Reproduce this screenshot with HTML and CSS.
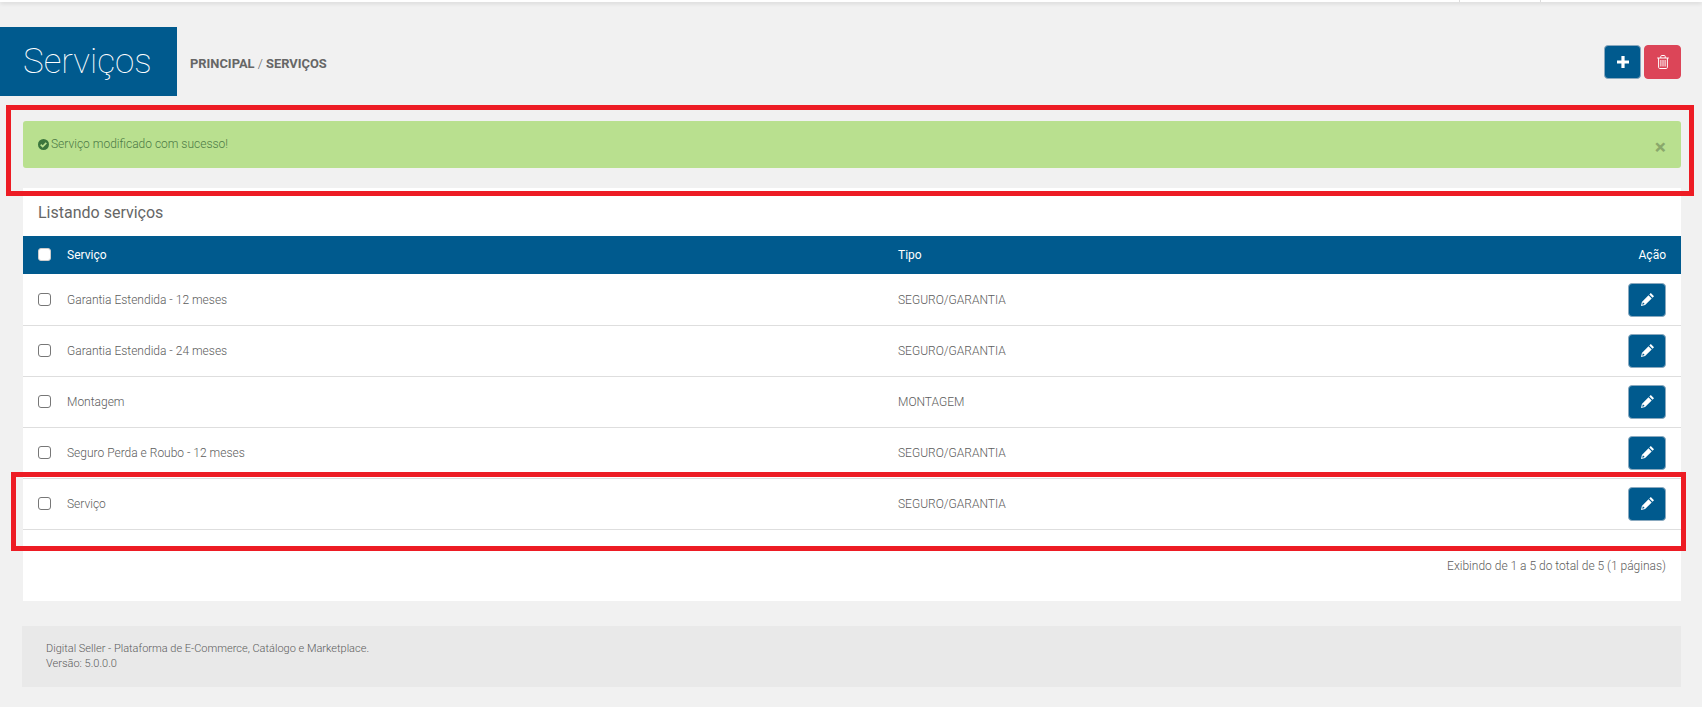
FILE: index.html
```html
<!DOCTYPE html>
<html lang="pt-BR">
<head>
<meta charset="utf-8">
<title>Serviços</title>
<link rel="stylesheet" href="styles.css">
</head>
<body>
<div class="page">
  <div class="topbar"><span class="topcell"></span><span class="topcell"></span></div>
  <header class="head">
    <h1 class="title">Serviços</h1>
    <div class="crumbs"><b>PRINCIPAL</b> / <b>SERVIÇOS</b></div>
    <div class="actions">
      <button class="btn btn-blue btn-add"><svg width="12" height="12" viewBox="0 0 12 12"><path fill="#fff" d="M4.4 0h3.2v4.4H12v3.2H7.6V12H4.4V7.6H0V4.4h4.4z"/></svg></button>
      <button class="btn btn-red"><svg width="12" height="14" viewBox="0 0 12 14"><path fill="none" stroke="#fff" stroke-width="1" d="M.2 3h11.6M1.6 3v9.3c0 .7.4 1.2 1 1.2h6.8c.6 0 1-.5 1-1.2V3M3.8 3V1.3c0-.5.3-.8.8-.8h2.8c.5 0 .8.3.8.8V3M3.9 5v6.5M6 5v6.5M8.1 5v6.5"/></svg></button>
    </div>
  </header>
  <div class="alert">
    <span class="alert-msg"><svg class="check" width="11" height="11" viewBox="0 0 11 11"><circle cx="5.5" cy="5.5" r="5.5" fill="#3c763d"/><path fill="none" stroke="#b9e08f" stroke-width="1.7" d="M2.7 5.6l2 2 3.6-3.8"/></svg>Serviço modificado com sucesso!</span>
    <span class="alert-close">×</span>
  </div>
  <section class="card">
    <h2 class="card-title">Listando serviços</h2>
    <div class="row row-head">
      <span class="box box-white"></span><span class="c-name">Serviço</span><span class="c-type">Tipo</span><span class="c-act">Ação</span>
    </div>
    <div class="row"><span class="box"></span><span class="c-name">Garantia Estendida - 12 meses</span><span class="c-type">SEGURO/GARANTIA</span><span class="c-act"><button class="btn btn-blue btn-edit"><svg class="pen" width="13" height="13" viewBox="0 0 13 13"><path fill="#fff" d="M9.8 0l3.2 3.2-1.5 1.5-3.2-3.2zM7.5 2.3l3.2 3.2-6.6 6.6L0 13l.9-4.1zM1.9 9.3l-.7 2.5 2.5-.7z"/></svg></button></span></div>
    <div class="row"><span class="box"></span><span class="c-name">Garantia Estendida - 24 meses</span><span class="c-type">SEGURO/GARANTIA</span><span class="c-act"><button class="btn btn-blue btn-edit"><svg class="pen" width="13" height="13" viewBox="0 0 13 13"><path fill="#fff" d="M9.8 0l3.2 3.2-1.5 1.5-3.2-3.2zM7.5 2.3l3.2 3.2-6.6 6.6L0 13l.9-4.1zM1.9 9.3l-.7 2.5 2.5-.7z"/></svg></button></span></div>
    <div class="row"><span class="box"></span><span class="c-name">Montagem</span><span class="c-type">MONTAGEM</span><span class="c-act"><button class="btn btn-blue btn-edit"><svg class="pen" width="13" height="13" viewBox="0 0 13 13"><path fill="#fff" d="M9.8 0l3.2 3.2-1.5 1.5-3.2-3.2zM7.5 2.3l3.2 3.2-6.6 6.6L0 13l.9-4.1zM1.9 9.3l-.7 2.5 2.5-.7z"/></svg></button></span></div>
    <div class="row"><span class="box"></span><span class="c-name">Seguro Perda e Roubo - 12 meses</span><span class="c-type">SEGURO/GARANTIA</span><span class="c-act"><button class="btn btn-blue btn-edit"><svg class="pen" width="13" height="13" viewBox="0 0 13 13"><path fill="#fff" d="M9.8 0l3.2 3.2-1.5 1.5-3.2-3.2zM7.5 2.3l3.2 3.2-6.6 6.6L0 13l.9-4.1zM1.9 9.3l-.7 2.5 2.5-.7z"/></svg></button></span></div>
    <div class="row"><span class="box"></span><span class="c-name">Serviço</span><span class="c-type">SEGURO/GARANTIA</span><span class="c-act"><button class="btn btn-blue btn-edit"><svg class="pen" width="13" height="13" viewBox="0 0 13 13"><path fill="#fff" d="M9.8 0l3.2 3.2-1.5 1.5-3.2-3.2zM7.5 2.3l3.2 3.2-6.6 6.6L0 13l.9-4.1zM1.9 9.3l-.7 2.5 2.5-.7z"/></svg></button></span></div>
    <p class="paging">Exibindo de 1 a 5 do total de 5 (1 páginas)</p>
  </section>
  <footer class="foot">Digital Seller - Plataforma de E-Commerce, Catálogo e Marketplace.<br>Versão: 5.0.0.0</footer>
  <div class="mark mark-alert"></div>
  <div class="mark mark-row"></div>
</div>
</body>
</html>
```
FILE: styles.css
```css
* { box-sizing: border-box; }
html, body { margin: 0; background: #fff; }
body { font-family: Roboto, sans-serif; font-size: 12px; font-weight: 300; color: #5c5c5c; overflow: hidden; }
.page { position: relative; height: 707px; background: #f1f1f1; overflow: hidden; }
.topbar { height: 2px; background: #fff; box-shadow: 0 1px 4px rgba(0,0,0,.18); display: flex; justify-content: flex-end; padding-right: 81px; }
.topcell { width: 81px; border-left: 1px solid #ddd; height: 2px; }
.head { display: flex; align-items: center; height: 69px; margin-top: 25px; padding-right: 21px; }
.title { margin: 0; width: 177px; height: 69px; padding-left: 23px; background: #005a8e; color: #fff; font-size: 35px; font-weight: 100; line-height: 69px; }
.crumbs { margin-left: 13px; margin-top: 4px; font-size: 12.9px; font-weight: 300; color: #666; }
.crumbs b { font-weight: 700; }
.actions { margin-left: auto; display: flex; gap: 3px; }
.btn { display: flex; align-items: center; justify-content: center; padding: 0; border-radius: 4px; border: 1px solid transparent; }
.btn-blue { background: #005a8e; border-color: #8aa9bf; }
.btn-red { background: #dc4558; width: 37px; height: 34px; border-color: #dc4558; }
.btn-add { width: 37px; height: 34px; }
.btn-edit { width: 38px; height: 34px; }
.pen { margin-bottom: 2px; }
.alert { display: flex; align-items: center; justify-content: space-between; height: 47px; margin: 25px 21px 20px 23px; padding: 0 15px; background: #b9e08f; border-radius: 3px; color: #4c7a45; font-size: 12px; }
.alert-msg { display: flex; align-items: center; gap: 1px; margin-bottom: 1px; }
.check { margin-right: 1px; }
.alert-close { font-size: 21px; font-weight: 700; color: #8aa86b; line-height: 1; margin-top: 5px; margin-right: 0; }
.card { height: 413px; margin: 0 21px 0 23px; background: #fff; }
.card-title { margin: 0; height: 48px; padding: 0 15px; font-size: 16px; font-weight: 400; line-height: 50px; color: #666; }
.row { display: flex; align-items: center; height: 51px; padding: 0 15px; border-bottom: 1.5px solid #dedede; }
.row-head { height: 38px; margin-bottom: 1px; background: #005a8e; color: #fff; border-bottom: 0; font-weight: 400; }
.box { width: 13px; height: 13px; flex: none; margin-bottom: 2px; border: 1px solid #777; border-radius: 3px; background: #fff; }
.box-white { border-color: #ccc; }
.c-name { width: 831px; flex: none; margin-left: 16px; }
.c-type { flex: 1; }
.c-act { display: flex; justify-content: flex-end; }
.paging { margin: 28px 15px 0 0; text-align: right; font-size: 12px; line-height: 16px; }
.foot { height: 61px; margin: 25px 21px 0 22px; padding: 15px 24px; background: #e9e9e9; font-size: 11px; line-height: 15px; }
.mark { position: absolute; border: 5px solid #ed1c24; pointer-events: none; }
.mark-alert { left: 6px; top: 105px; width: 1688px; height: 91px; }
.mark-row { left: 11px; top: 472px; width: 1675px; height: 79px; }
```
